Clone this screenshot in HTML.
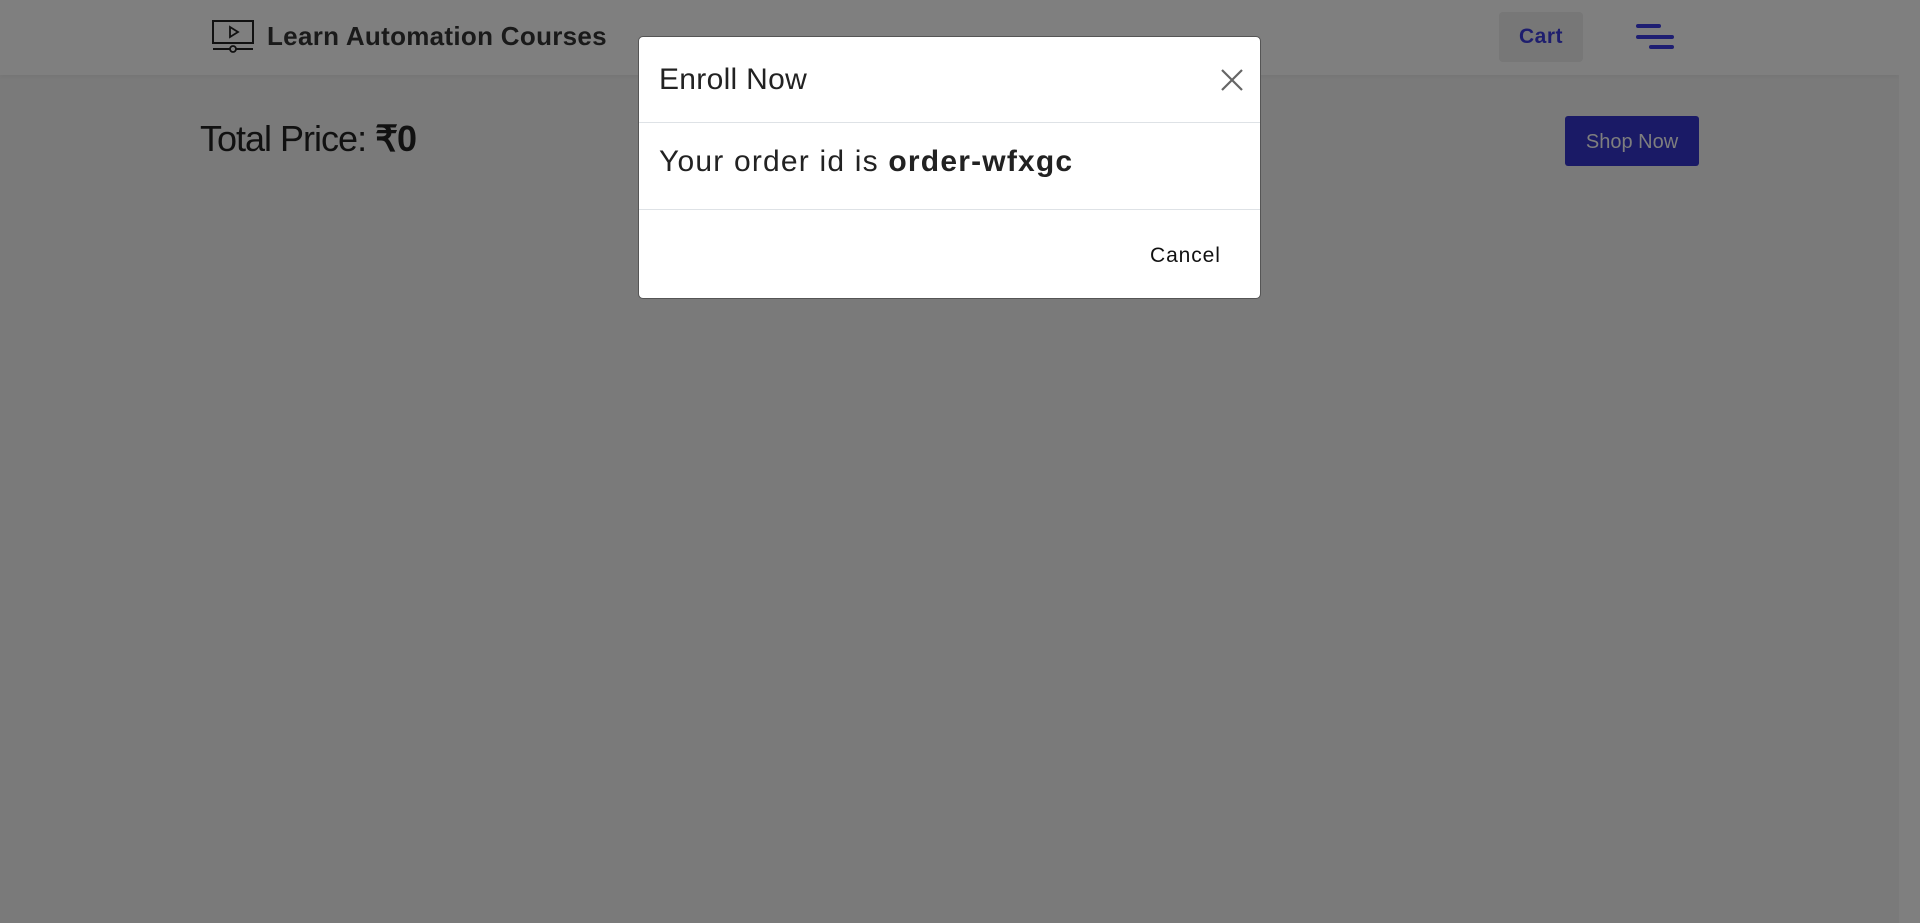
<!DOCTYPE html>
<html><head><meta charset="utf-8"><style>
html,body{margin:0;padding:0;width:1920px;height:923px;overflow:hidden;background:#7a7a7a;font-family:"Liberation Sans",sans-serif;position:relative}
.nav{position:absolute;left:0;top:0;width:1899px;height:75px;background:#7f7f7f;box-shadow:0 2px 4px rgba(0,0,0,0.04)}
.sb{position:absolute;left:1899px;top:0;width:21px;height:923px;background:#7f7f7f}
.brand{position:absolute;left:267px;top:21px;font-size:26px;font-weight:bold;color:#1a1a1a;letter-spacing:0.3px}
.cart{position:absolute;left:1499px;top:12px;width:84px;height:50px;background:#777;border-radius:4px;color:#1e1e6e;font-weight:bold;font-size:21px;text-align:center;line-height:50px;letter-spacing:0.5px}
.hb{position:absolute;height:4px;background:#1e1e72;border-radius:2px}
.total{position:absolute;left:200px;top:118px;font-size:36px;color:#111;letter-spacing:-1px}
.shop{position:absolute;left:1565px;top:116px;width:134px;height:50px;background:#1a1a66;border-radius:3px;color:#7e7e7e;font-size:20px;text-align:center;line-height:52px}
.modal{position:absolute;left:638px;top:36px;width:623px;height:263px;background:#fff;border-radius:5px;border:1px solid #555;box-sizing:border-box}
.title{position:absolute;left:20px;top:26px;font-size:30px;color:#222;letter-spacing:0.3px}
.close{position:absolute;left:580px;top:30px}
.hr{position:absolute;left:0;width:100%;height:1px;background:#dee2e6}
.body{position:absolute;left:20px;top:108px;font-size:30px;color:#222;letter-spacing:1.2px}
.cancel{position:absolute;left:511px;top:207px;font-size:21px;color:#111;letter-spacing:0.9px}
</style></head><body>
<div class="nav">
<svg style="position:absolute;left:211px;top:19px" width="44" height="36" viewBox="0 0 44 36"><rect x="2" y="2" width="40" height="22" fill="none" stroke="#111" stroke-width="2"/><path d="M19 8 L27 13 L19 18 Z" fill="none" stroke="#111" stroke-width="1.8"/><line x1="2" y1="30" x2="42" y2="30" stroke="#111" stroke-width="2"/><circle cx="22" cy="30" r="3" fill="#7f7f7f" stroke="#111" stroke-width="1.8"/></svg>
<div class="brand">Learn Automation Courses</div>
<div class="cart">Cart</div>
<div class="hb" style="left:1636px;top:24px;width:25px"></div>
<div class="hb" style="left:1636px;top:35px;width:38px"></div>
<div class="hb" style="left:1649px;top:45px;width:25px"></div>
</div>
<div class="sb"></div>
<div class="total">Total Price: <b>₹0</b></div>
<div class="shop">Shop Now</div>
<div class="modal">
<div class="title">Enroll Now</div>
<svg class="close" width="26" height="26" viewBox="0 0 26 26"><path d="M3 3 L23 23 M23 3 L3 23" stroke="#666" stroke-width="2.2"/></svg>
<div class="hr" style="top:85px"></div>
<div class="body">Your order id is <b>order-wfxgc</b></div>
<div class="hr" style="top:172px"></div>
<div class="cancel">Cancel</div>
</div>
</body></html>
